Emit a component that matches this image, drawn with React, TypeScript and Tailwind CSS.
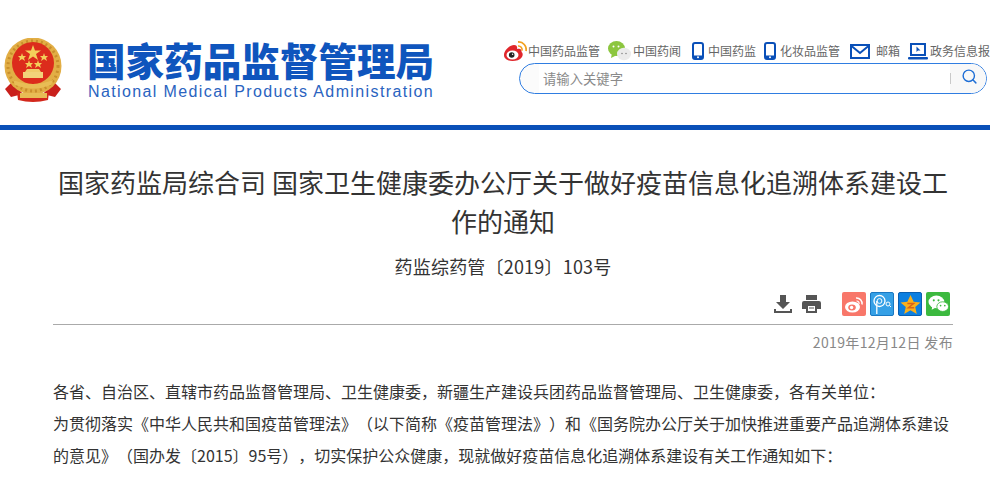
import { Search } from "lucide-react";

const cjk = "font-['Noto_Sans_CJK_SC','Liberation_Sans',sans-serif]";

const Emblem = () => (
  <svg width="60" height="65" viewBox="0 0 60 65" className="shrink-0">
    <path d="M9 44 L2 51 L8 59 L20 56 Z M51 44 L58 51 L52 59 L40 56 Z" fill="#c9201c" />
    <path d="M14 54 Q30 60 46 54 L45 62 Q30 66 15 62 Z" fill="#d3281c" />
    <circle cx="30" cy="28" r="28.5" fill="#e2ae45" />
    <circle cx="30" cy="28" r="25" fill="none" stroke="#c98f2c" strokeWidth="3" strokeDasharray="2 3" />
    <circle cx="30" cy="25" r="21" fill="#dc2c1c" />
    <polygon points="30,7 32,12.5 38,12.5 33,16 35,22 30,18.5 25,22 27,16 22,12.5 28,12.5" fill="#f3cf5a" />
    <polygon points="19,15 20,18 23,18 21,20 22,23 19,21 16,23 17,20 15,18 18,18" fill="#f3cf5a" />
    <polygon points="41,15 42,18 45,18 43,20 44,23 41,21 38,23 39,20 37,18 40,18" fill="#f3cf5a" />
    <polygon points="26,22 27,25 30,25 28,27 29,30 26,28 23,30 24,27 22,25 25,25" fill="#f3cf5a" />
    <polygon points="35,22 36,25 39,25 37,27 38,30 35,28 32,30 33,27 31,25 34,25" fill="#f3cf5a" />
    <path d="M24 31 h12 l2 3 h-16 Z" fill="#f0cb6a" />
    <rect x="20" y="34" width="20" height="6" fill="#f2d27a" />
    <path d="M10 42 Q30 50 50 42 L48 47 Q30 54 12 47 Z" fill="#e8bd55" />
    <rect x="17" y="55" width="27" height="5" fill="#e8bd55" />
  </svg>
);

const WeiboIcon = ({ size = 24 }: { size?: number }) => (
  <svg width={size} height={size} viewBox="0 0 24 24">
    <path d="M1 16 C1 11 7 6 11 6 C14 6 14.5 8 14 10 C17 9 19 10 18.5 13 C20 14 20 16 19 18 C17 21 13 22 9.5 22 C5 22 1 20 1 16 Z" fill="#e0262b" />
    <ellipse cx="9.5" cy="16" rx="6" ry="4.5" fill="#fff" />
    <circle cx="8.7" cy="16" r="2.8" fill="#222" />
    <circle cx="9.6" cy="15.2" r=".7" fill="#fff" />
    <path d="M15 3 a7.5 7.5 0 0 1 8 9" fill="none" stroke="#f2a11f" strokeWidth="1.8" />
    <path d="M15 7 a3.7 3.7 0 0 1 4 4.6" fill="none" stroke="#f2a11f" strokeWidth="1.6" />
  </svg>
);

const WechatIcon = () => (
  <svg width="23" height="20" viewBox="0 0 23 20">
    <ellipse cx="8.5" cy="7.5" rx="8.5" ry="7.5" fill="#8cc63f" />
    <path d="M4 12 L3 17 L9 14 Z" fill="#8cc63f" />
    <circle cx="5.5" cy="5.5" r="1" fill="#fff" />
    <circle cx="10.5" cy="5.5" r="1" fill="#fff" />
    <ellipse cx="16" cy="13" rx="7" ry="6.2" fill="#ebebeb" />
    <circle cx="14" cy="12.5" r=".8" fill="#888" />
    <circle cx="18" cy="12.5" r=".8" fill="#888" />
  </svg>
);

const PhoneIcon = () => (
  <svg width="12" height="18" viewBox="0 0 12 18">
    <rect x="1" y="1" width="10" height="16" rx="2" fill="#fff" stroke="#0a50b8" strokeWidth="2" />
    <rect x="1" y="13.5" width="10" height="3.5" fill="#0a50b8" />
    <circle cx="6" cy="15.2" r="1" fill="#fff" />
  </svg>
);

const MailIcon = () => (
  <svg width="20" height="15" viewBox="0 0 20 15">
    <rect x="1" y="1" width="18" height="13" fill="#fff" stroke="#0a50b8" strokeWidth="2" />
    <path d="M1.5 2 L10 9 L18.5 2" fill="none" stroke="#0a50b8" strokeWidth="2" />
  </svg>
);

const ScreenIcon = () => (
  <svg width="20" height="17" viewBox="0 0 20 17">
    <rect x="3" y="1" width="14" height="11" fill="#fff" stroke="#0a50b8" strokeWidth="2" />
    <path d="M8.5 3.5 L8.5 9 L10 7.6 L12.5 7.5 Z" fill="#0a50b8" />
    <rect x="0" y="14" width="20" height="2.5" rx="1" fill="#0a50b8" />
  </svg>
);

const TopLink = ({
  icon,
  label,
  className,
}: {
  icon: React.ReactNode;
  label: string;
  className: string;
}) => (
  <div className={`flex items-center shrink-0 ${className}`}>
    {icon}
    <span className="text-[12px] leading-[18px] text-[#666] whitespace-nowrap">{label}</span>
  </div>
);

const ShareTile = ({ bg, children }: { bg: string; children: React.ReactNode }) => (
  <div className={`w-[24px] h-[24px] rounded-[2px] flex items-center justify-center overflow-hidden ${bg}`}>
    {children}
  </div>
);

export default function App() {
  return (
    <div className={`w-[990px] h-[484px] overflow-hidden bg-white [text-spacing-trim:space-all] ${cjk}`}>
      {/* Header */}
      <header className="h-[125px] flex">
        <div className="w-[503px] shrink-0 flex pl-[3px] pt-[38px]">
          <Emblem />
          <div className="ml-[24px] mt-[2px]">
            <div className="text-[38.6px] leading-[38px] font-black text-[#0f55bd] whitespace-nowrap">
              国家药品监督管理局
            </div>
            <div className="font-['Liberation_Sans',sans-serif] text-[16px] leading-[18px] mt-[5px] ml-[1px] tracking-[1.38px] text-[#2a63bf] whitespace-nowrap">
              National Medical Products Administration
            </div>
          </div>
        </div>
        <div className="w-[487px] shrink-0 overflow-hidden pt-[41px]">
          <div className="flex items-center h-[20px] whitespace-nowrap">
            <TopLink icon={<WeiboIcon />} label="中国药品监管" className="w-[105px] gap-[1px]" />
            <TopLink icon={<WechatIcon />} label="中国药闻" className="w-[84px] gap-[2px]" />
            <TopLink icon={<PhoneIcon />} label="中国药监" className="w-[72px] gap-[4px]" />
            <TopLink icon={<PhoneIcon />} label="化妆品监管" className="w-[86px] gap-[4px]" />
            <TopLink icon={<MailIcon />} label="邮箱" className="w-[58px] gap-[6px]" />
            <TopLink icon={<ScreenIcon />} label="政务信息报" className="gap-[2px] w-[82px] overflow-hidden" />
          </div>
          <div className="mt-[2px] ml-[16px] w-[468px] h-[31px] rounded-full border border-[#2f7de1] bg-[#fbfbfb] flex items-center overflow-hidden">
            <div className="flex-1 ml-[19px] h-full bg-white pl-[4px] text-[13.33px] leading-[29px] text-[#8a8a8a]">
              请输入关键字
            </div>
            <div className="w-[36px] h-full bg-[#f8f8f8] flex items-center">
              <span className="w-px h-[11px] bg-[#c9c9c9]" />
              <Search size={17} strokeWidth={2} className="ml-[10px] -mt-[4px] text-[#1f6fd6]" />
            </div>
          </div>
        </div>
      </header>

      <div className="h-[5px] bg-[#0a50b8]" />

      {/* Article */}
      <main className="w-[900px] ml-[53px]">
        <h1 className="mt-[32px] -mx-[2px] text-[26px] leading-[39px] text-[#333] font-normal text-center">
          国家药监局综合司 国家卫生健康委办公厅关于做好疫苗信息化追溯体系建设工作的通知
        </h1>
        <p className="mt-[13px] text-[18px] leading-[27px] text-[#333] text-center tracking-[0.2px]">
          药监综药管〔2019〕103号
        </p>

        <div className="mt-[12px] h-[32px] flex items-start justify-end border-b border-[#aaa] box-content">
          <div className="flex items-center gap-[10px] mr-[21px] h-[24px]">
            <svg width="18" height="18" viewBox="0 0 18 18" fill="#555">
              <path d="M6 0 h6 v7 h4 l-7 7 l-7 -7 h4 Z" />
              <path d="M0 14 h2 v2 h14 v-2 h2 v4 h-18 Z" />
            </svg>
            <svg width="19" height="18" viewBox="0 0 19 18" fill="#555">
              <path d="M4 0 h11 v5 h-11 Z" />
              <path d="M2 6 h15 a2 2 0 0 1 2 2 v6 h-4 v4 h-11 v-4 h-4 v-6 a2 2 0 0 1 2 -2 Z" />
              <rect x="6" y="11" width="7" height="5" fill="#fff" />
              <rect x="7" y="12.5" width="5" height="1" fill="#555" />
            </svg>
          </div>
          <div className="flex gap-[4px] mr-[3px]">
            <ShareTile bg="bg-[#f8776a]">
              <svg width="20" height="17" viewBox="0 0 20 17">
                <ellipse cx="8.5" cy="11" rx="7.5" ry="5.5" fill="#fff" />
                <ellipse cx="8" cy="11.5" rx="3.8" ry="3" fill="#f8776a" />
                <circle cx="7.6" cy="11.5" r="1.7" fill="#fff" />
                <path d="M12 2 a5.5 5.5 0 0 1 6 6.5" fill="none" stroke="#fff" strokeWidth="1.5" />
                <path d="M12.5 5 a2.4 2.4 0 0 1 2.6 2.9" fill="none" stroke="#fff" strokeWidth="1.2" />
              </svg>
            </ShareTile>
            <ShareTile bg="bg-[#35a0e6] border border-[#1a78c2]">
              <svg width="22" height="22" viewBox="0 0 22 22" fill="none" stroke="#fff">
                <circle cx="8.5" cy="8" r="5.5" strokeWidth="1.3" />
                <circle cx="8.5" cy="8" r="2.4" strokeWidth="1" />
                <path d="M5.8 8 V21" strokeWidth="1.3" />
                <circle cx="17" cy="11" r="2" strokeWidth="1" />
                <path d="M18.5 12.5 L20 14" strokeWidth="1" />
              </svg>
            </ShareTile>
            <ShareTile bg="bg-[#0c7fe0] border border-[#0a5fb0]">
              <svg width="21" height="21" viewBox="0 0 20 20">
                <polygon points="10,1 13,7.4 19.5,8 14.5,12.3 16,19 10,15.4 4,19 5.5,12.3 .5,8 7,7.4" fill="#f8b01c" />
                <path d="M7 9 h6 l-5 4 h5.5" fill="none" stroke="#d8631a" strokeWidth="1.4" />
              </svg>
            </ShareTile>
            <ShareTile bg="bg-[#3cb93f]">
              <svg width="21" height="18" viewBox="0 0 20 17">
                <ellipse cx="8" cy="6.5" rx="7.5" ry="6" fill="#fff" />
                <path d="M4 11 L3.5 14 L7 12 Z" fill="#fff" />
                <ellipse cx="14" cy="11" rx="5.6" ry="4.6" fill="#fff" stroke="#3cb93f" strokeWidth=".8" />
                <circle cx="5.5" cy="5" r="1" fill="#3cb93f" />
                <circle cx="10" cy="5" r="1" fill="#3cb93f" />
                <circle cx="12" cy="10" r=".8" fill="#3cb93f" />
                <circle cx="16" cy="10" r=".8" fill="#3cb93f" />
              </svg>
            </ShareTile>
          </div>
        </div>

        <p className="mt-[7px] text-[14px] leading-[21px] text-[#888] text-right tracking-[0.35px]">
          2019年12月12日 发布
        </p>

        <div className="mt-[22px] -mr-[1px] text-[16px] leading-[32px] text-[#333]">
          <p>各省、自治区、直辖市药品监督管理局、卫生健康委，新疆生产建设兵团药品监督管理局、卫生健康委，各有关单位：</p>
          <p>
            为贯彻落实《中华人民共和国疫苗管理法》（以下简称《疫苗管理法》）和《国务院办公厅关于加快推进重要产品追溯体系建设的意见》（国办发〔2015〕95号），切实保护公众健康，现就做好疫苗信息化追溯体系建设有关工作通知如下：
          </p>
        </div>
      </main>
    </div>
  );
}
